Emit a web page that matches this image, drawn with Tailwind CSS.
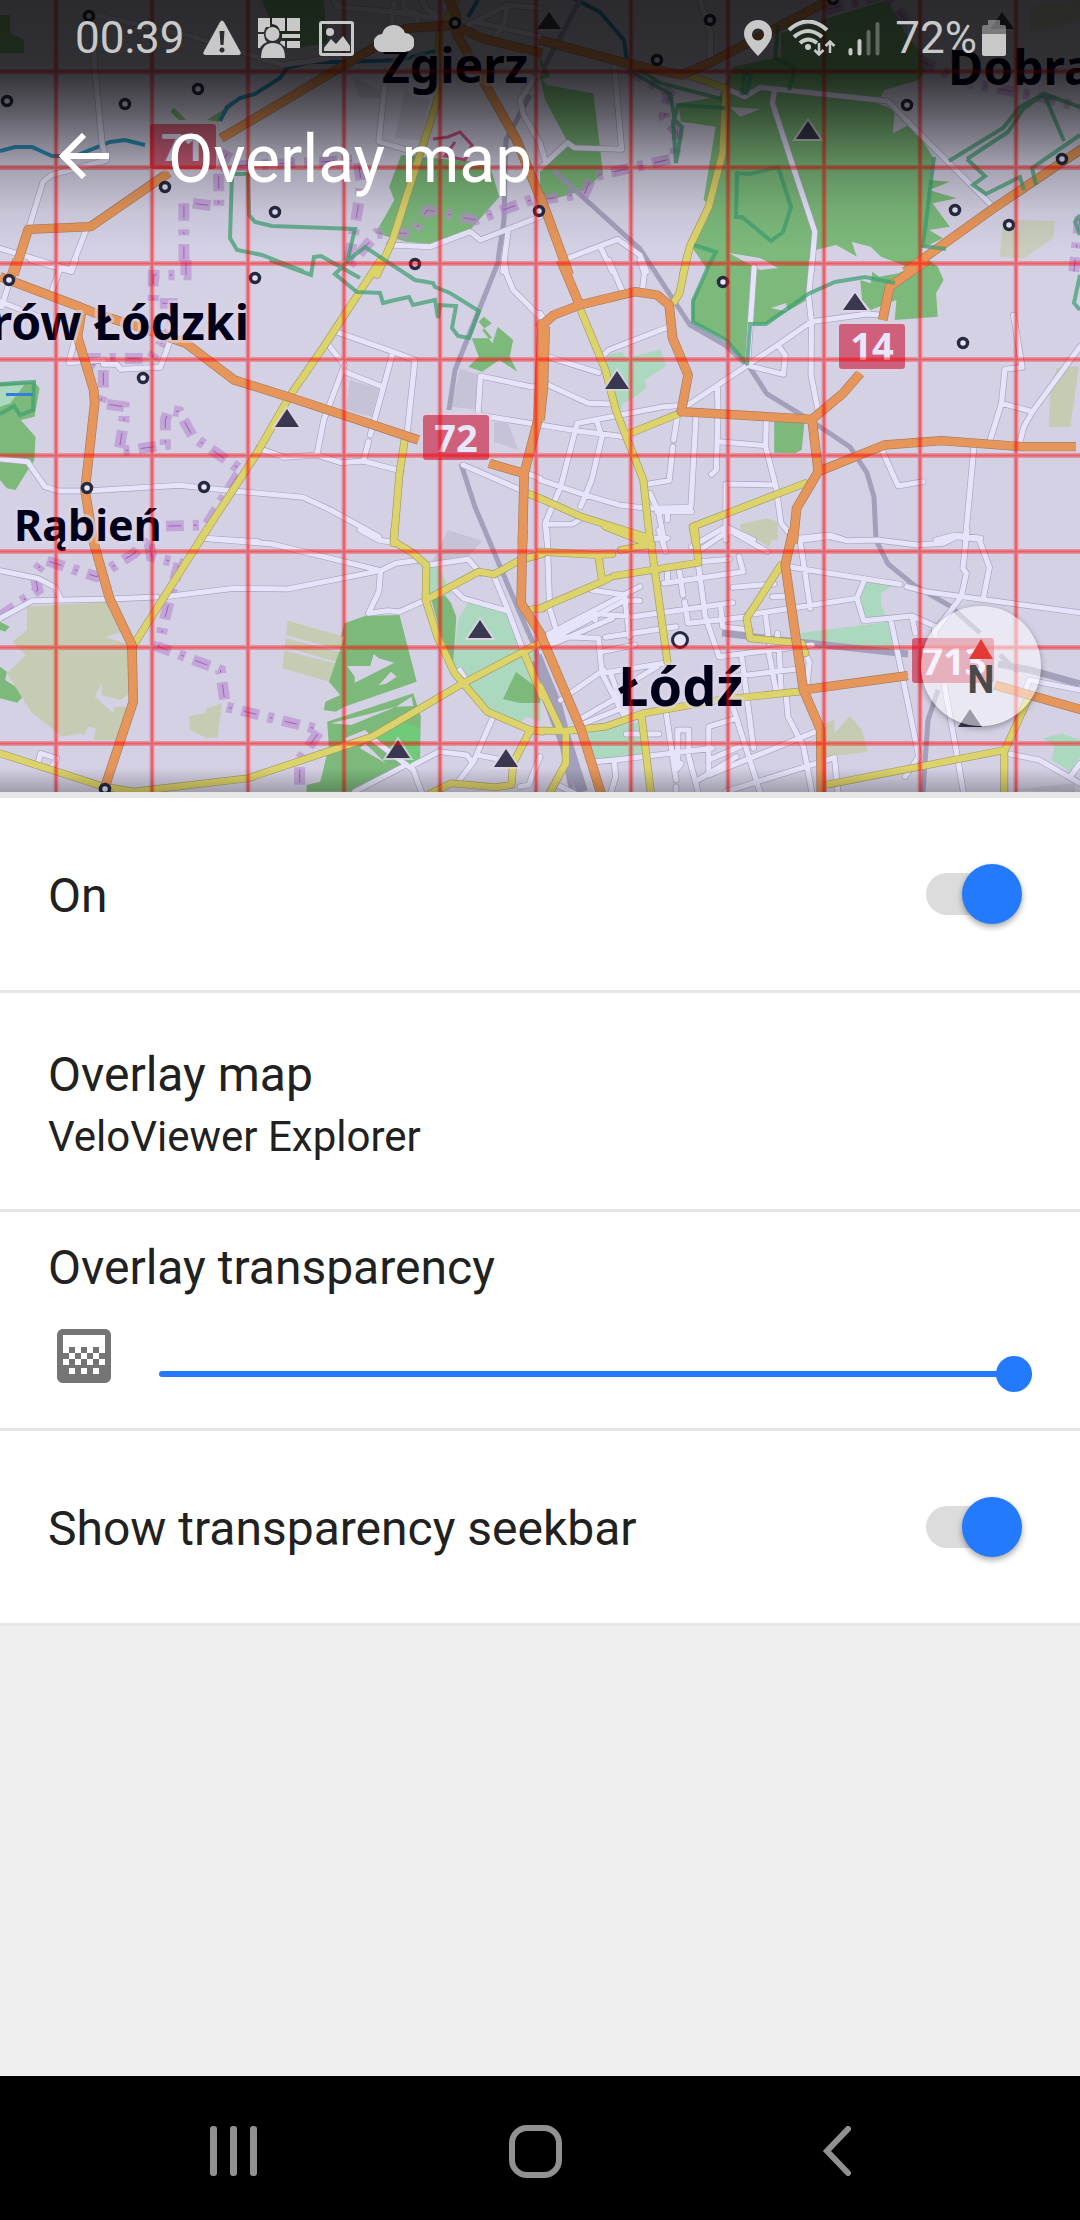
<!DOCTYPE html>
<html lang="en">
<head>
<meta charset="utf-8">
<meta name="viewport" content="width=device-width, initial-scale=1">
<title>Overlay map</title>
<script src="https://cdn.jsdelivr.net/npm/@tailwindcss/browser@4"></script>
</head>
<body class="flex min-h-screen flex-col bg-[#efefef] font-[Roboto,sans-serif] text-[#212121]">

<header class="relative h-[792px] overflow-hidden bg-[#d5d1e5] text-white">
  <svg class="absolute inset-0 h-full w-full" viewBox="0 0 1080 792" preserveAspectRatio="xMidYMin slice" role="img" aria-label="Map of the Łódź area">
    <defs>
      <linearGradient id="scrim" x1="0" y1="0" x2="0" y2="1">
        <stop offset="0" stop-color="#000" stop-opacity=".8"/>
        <stop offset=".28" stop-color="#000" stop-opacity=".77"/>
        <stop offset=".45" stop-color="#000" stop-opacity=".56"/>
        <stop offset=".65" stop-color="#000" stop-opacity=".25"/>
        <stop offset=".85" stop-color="#000" stop-opacity=".06"/>
        <stop offset="1" stop-color="#000" stop-opacity="0"/>
      </linearGradient>
      <linearGradient id="edge" x1="0" y1="0" x2="0" y2="1">
        <stop offset="0" stop-color="#000" stop-opacity="0"/>
        <stop offset="1" stop-color="#000" stop-opacity=".25"/>
      </linearGradient>
      <!-- minor roads, by map tile -->
      <g id="minor">
        <path transform="scale(.3444 .3333)" d="M268 40L275 200 297 435 310 480 150 525 125 545 82 690M275 45L560 110 820 195 950 175M1118 250L1100 425 1230 465M1130 735L1250 740 1365 695 1395 720 1568 650M1475 695L1460 815M0 745L205 810 250 690M970 0L980 20 1135 35 1240 50 1300 60M1135 90L1145 10M1170 0L1175 30 1210 40 1215 80M1225 0L1240 30 1300 60M1340 85L1475 15 1568 25M1475 15L1460 80 1430 120M1380 65L1568 110M1568 210L1510 300 1520 345 1568 430"/>
        <path transform="translate(540) scale(.3444 .3333)" d="M465 0L495 100V190M215 185L237 448 100 443 80 428 0 505M550 270L595 290 640 262 1010 303 1130 430 1320 625M680 275L675 310 735 500 798 695 788 815M80 775L225 718 290 765 310 815M175 740L210 815M0 430L15 480"/>
        <path transform="translate(0 260) scale(.3444 .3333)" d="M90 0L207 35 220 0M175 25L150 95M26 70L5 140M0 125L150 185M235 170L200 308 300 300M300 313L340 313 350 328 465 322 495 240M975 215L1140 275 1205 300 1180 540M950 250L1000 315 940 480 920 585M1000 335L1110 380M1140 280L1090 470 1075 525M1070 545L1055 605M750 565L825 592 920 585 990 608 1055 603 1165 633M0 597L80 605 130 680 170 693 250 693 520 676 700 695 880 712 960 750 1100 830M1465 0L1470 40 1490 90 1568 170M1568 380L1540 380 1395 348 1388 465 1568 495M1345 615L1568 715M1530 640L1568 655M590 835L750 845"/>
        <path transform="translate(540 260) scale(.3444 .3333)" d="M200 0L240 95M290 0L303 40 298 85M622 20L603 310M790 0L780 110 788 185 787 345 808 455M985 165L950 162 788 185 690 255 430 435 360 440 108 490 60 680 15 790 20 840M690 255L712 285 707 343 610 318M375 200L200 270 180 290M15 288L170 338M20 373L140 430 210 432M0 495L110 513 245 530M165 485L180 530 150 660 118 740M398 475L388 540M386 560L375 662 315 672M453 470L438 742 310 745 230 735 130 705 0 660M515 385L517 450 512 630 498 643M520 545L655 557M657 485L655 560 685 680 700 790 740 840M540 840V672L680 675M320 700L345 760 360 840M340 755L440 755M370 760V780M20 793L95 792 120 775M995 575L1040 678 1112 665M1375 165L1400 322 1350 328 1340 430 1307 540M1340 430L1430 455M1568 260L1430 455 1405 500 1393 548M1260 560L1235 840M440 860L540 800 620 840M750 835L840 825 880 838M1150 840L1205 825 1280 835M0 160L15 180"/>
        <path transform="translate(0 530) scale(.3444 .3333)" d="M0 122L110 145 160 172 178 210M0 265L95 212 320 207 455 201M480 200L680 175 835 177 1105 122 1150 100 1220 90M590 25L790 42 1105 122 1100 185 1070 250 1125 242 1160 245 1236 210M1045 0L1100 30 1145 38M1245 105L1360 88 1395 130M1320 180L1345 205 1475 243M1435 140L1475 240 1520 365M1085 630L1200 720 1225 790M1030 785L1170 710M1200 705L1275 665 1355 675 1370 695M1430 565L1375 695 1330 755M1385 675L1450 688M1568 680L1535 765 1510 770M110 700L118 670 165 685 150 712M1335 420L1350 445"/>
        <path transform="translate(540 530) scale(.3444 .3333)" d="M20 0L28 235 50 310M345 0L365 65M360 160L590 125 578 80M465 60L550 0 660 65M465 95L550 88M405 125L415 195M370 110V155M330 25H370M460 105L480 260 520 380 790 345M290 170L20 315M150 180L245 195 260 320M290 212H245L30 330M0 330L150 250 270 260 560 218M210 265L30 345M160 240V270M190 322L395 290M30 318L170 325 180 430 245 560M420 215L430 280 540 268 600 260M525 235L530 290 610 300M560 172L680 162M675 200L720 198M600 255L920 205 940 155M760 30L840 20 890 32 980 30 1095 45 1170 40 1210 20 1275 28 1305 112 1288 200M755 30L785 235M730 112L1045 163M1065 170L1120 185 1568 248M1240 0L1228 115 1238 130 1223 200 1150 300M920 205L940 272 1080 258 1150 290M1020 275L1100 680 1060 740M1080 258L1090 310M1145 300L1210 670 1230 790M655 255L665 340M690 310V340M275 345L180 365M360 400L180 430M185 420L60 510M230 500L120 565M260 525L130 580M340 410L260 460M205 430L250 560M585 375L620 655M665 370L685 480M695 370L700 480M560 440L740 418M770 370L782 395 775 465M715 500L720 560 765 650 790 790M250 612H345M365 540L390 715 395 750M395 790V770M400 700V600H432V680L460 790M400 715L410 700M160 695L215 690 220 740 205 790M220 690L500 655M570 565L490 590V735L800 605M460 750L570 680M560 530L600 660 640 790M490 690L580 650M540 785L855 683 865 785M1365 672L1450 690 1568 760M1568 700L1540 740M1410 480L1420 450 1568 480M50 765L100 790M250 560L265 530"/>
      </g>
      <g id="yellow">
        <path transform="scale(.3444 .3333)" d="M1325 0L1275 100 1270 300 1140 720 1095 825"/>
        <path transform="translate(540) scale(.3444 .3333)" d="M430 225L540 265 530 460 490 620 435 740 415 825"/>
        <path transform="translate(0 260) scale(.3444 .3333)" d="M1105 0L940 260 840 410 740 590 575 850M1175 540L1160 640 1143 850M1530 700L1568 715"/>
        <path transform="translate(540 260) scale(.3444 .3333)" d="M427 -10L405 100 390 125M120 155L190 330 220 450 250 530 300 660 320 850M250 525L405 460M0 715L120 770 320 835M452 850L443 800 770 670"/>
        <path transform="translate(0 530) scale(.3444 .3333)" d="M600 0L480 195 388 345M1145 0V35L1200 70 1238 105 1236 210 1270 320 1320 430 1345 460 1415 545 1540 600 1575 605M1236 210L1390 125 1435 133 1510 90 1575 72M1575 335L1345 460 1080 620 720 745 390 785 300 770 0 670M1520 365L1575 500M1540 600L1490 700 1485 765 1440 772 1310 760 1250 790M1530 240L1575 235"/>
        <path transform="translate(540 530) scale(.3444 .3333)" d="M190 -10L325 45M0 65L165 75 210 72M170 80L180 150M0 235L180 155 200 145M325 60L370 395M235 60L325 43M215 138L460 98 450 0M700 105L600 265 610 325 760 340 770 370M0 602L75 603 190 590 300 550 520 510 750 485M295 560L322 790M75 603V700L30 785M0 470L60 600M830 765L1350 660 1420 500M1348 660V790"/>
      </g>
      <g id="orange">
        <path transform="scale(.3444 .3333)" d="M642 415L1180 85 1320 75 1400 115 1575 160M1300 -10L1325 45V100L1410 255 1500 420 1575 610M40 825L82 688 263 680 490 518"/>
        <path transform="translate(540) scale(.3444 .3333)" d="M0 120L250 190 410 225 500 185 850 -5M0 585L85 825M1575 445L1310 630 1060 815"/>
        <path transform="translate(0 260) scale(.3444 .3333)" d="M50 0L28 60M0 50L230 140 290 165 400 200 540 250 680 360 850 415 1070 490 1215 540M238 145L225 230 272 390 275 430 247 690 270 840M1420 610L1520 640M1575 180L1562 480 1522 640 1517 850"/>
        <path transform="translate(540 260) scale(.3444 .3333)" d="M60 0L115 135M-5 205L40 165 115 135 275 95 340 105 375 135 385 235 430 345 410 455 790 478 880 400 930 340M995 180L1015 80 1125 0M790 478L808 635 745 745 735 850M808 635L1000 555 1165 542 1400 560H1556M15 200L10 380 0 480"/>
        <path transform="translate(0 530) scale(.3444 .3333)" d="M270 30L318 205 383 345 387 515 305 770M1518 0L1513 220 1575 320"/>
        <path transform="translate(540 530) scale(.3444 .3333)" d="M735 0L712 105 765 480 790 540 815 600 817 790M765 480L1068 437M1320 465L1575 540M0 310L120 600 180 800"/>
      </g>
      <g id="boundary">
        <path transform="scale(.3444 .3333)" d="M534 610V800M560 610L635 620V500L1040 480 1050 560 1010 800 1095 700H1200L1240 630 1380 660 1568 590M640 500L665 450"/>
        <path transform="translate(540) scale(.3444 .3333)" d="M0 600L130 580 150 530 390 475 400 400 360 350 375 280 250 205M830 30L1010 -20 1070 80M1100 180L1250 250 1450 290 1568 320M1568 650L1550 815"/>
        <path transform="translate(0 260) scale(.3444 .3333)" d="M540 0V45H445V130H500V200L440 295H240L300 330V400L290 430 360 440V480L345 575 480 555V480L490 450 520 455 560 530 700 630 640 730 600 795 430 800"/>
        <path transform="translate(0 530) scale(.3444 .3333)" d="M0 260L110 180 100 130 130 90 280 140 390 70 430 20 440 80 520 100 480 260 460 350 640 420 655 530 930 600 870 690V790"/>
      </g>
      <path id="grid" d="M56 0V792M152 0V792M248 0V792M344 0V792M440 0V792M536 0V792M631 0V792M728 0V792M824 0V792M920 0V792M1016 0V792M0 71.500H1080M0 167.500H1080M0 263.500H1080M0 359.500H1080M0 455.500H1080M0 551.500H1080M0 647.500H1080M0 743.500H1080"/>
    </defs>

    <!-- woods -->
    <g fill="#7cb97b">
      <g transform="scale(.3444 .3333)">
        <path d="M0 45H30V100L70 120V160H0ZM760 0H940L950 130 860 145 800 100ZM1165 465L1420 490 1450 590 1365 690 1250 732 1180 725 1090 700 1145 600 1130 560ZM495 335L505 323 540 360H520ZM600 360L680 310 635 365Z"/>
      </g>
      <g transform="translate(540) scale(.3444 .3333)">
        <path d="M0 230L20 255 155 280 183 520 130 570 30 600 0 590V505L80 425 15 300ZM850 50L1010 0 1060 100 1130 190 1100 240 1000 270 980 310 1030 330 1025 400 1080 370 1140 470 1130 540 1190 545 1130 570 1210 595 1140 610 1190 680 1130 690 1170 715 1110 745 1105 815 990 770 960 740 905 725 920 770 860 735 800 750 790 815H490L440 740 500 620 475 600 510 380 410 365 400 310 520 290 560 200 700 170V100ZM0 170L30 230 0 240Z"/>
      </g>
      <g transform="translate(0 260) scale(.3444 .3333)">
        <path d="M1390 185L1405 170 1428 190 1400 210 1430 250 1445 200 1490 240 1480 290 1502 335 1450 300 1400 335 1360 320 1390 290 1370 235H1430ZM0 370L100 365 115 385 100 470 60 480 103 530 100 600 75 640 45 690 20 685 0 660Z"/>
      </g>
      <g transform="translate(540 260) scale(.3444 .3333)">
        <path d="M500 0H785L775 120 655 192 605 190 600 310 540 240 440 185 443 120ZM930 60L960 70 965 35 985 50 1040 40 1130 0 1155 20 1172 60 1150 100 1155 170 1030 180 1035 120 960 150 935 120ZM680 485H768L760 570 740 580 680 578Z"/>
      </g>
      <g transform="translate(0 530) scale(.3444 .3333)">
        <path d="M1000 280L1060 258 1160 255 1210 455 1000 530 975 545 940 540 945 515 988 495 955 455ZM950 575L1200 490 1222 560 1218 690 1100 740 1030 785H890V765L930 755 955 650ZM1250 200L1280 180 1310 220 1325 260 1315 420 1290 350ZM0 275L28 290 15 305 0 300ZM0 410L20 425 15 450 75 490 50 518 0 505Z"/>
        <path fill="#6fcb78" d="M1090 625L1170 575 1220 595V690L1190 710Z"/>
      </g>
    </g>
    <!-- parks -->
    <g fill="#acd8bf">
      <path transform="translate(540 260) scale(.3444 .3333)" d="M195 285L240 275 250 295 350 268 365 318 305 360 310 380 285 405 240 430 235 460 190 340Z"/>
      <path transform="translate(0 530) scale(.3444 .3333)" d="M1245 110H1275L1310 190 1250 210ZM1360 215L1475 245 1515 350 1570 370V575L1530 560 1510 575 1415 545 1350 460 1315 415 1330 270Z"/>
      <path transform="translate(540 530) scale(.3444 .3333)" d="M940 155L1025 165 990 190V225L1010 270 945 268 930 200ZM750 310L1015 275 1025 355 765 330ZM140 605L290 575 295 680 155 690ZM1460 625L1515 610 1568 630V680L1540 725 1485 690 1495 650Z"/>
      <path transform="translate(0 260) scale(.3444 .3333)" d="M0 380L70 375 30 430 0 440Z"/>
    </g>
    <path fill="#7cb97b" d="M503 699L516 672 540 690V703L520 703Z"/>
    <!-- farmland and plots -->
    <g fill="#c6ccb4">
      <path transform="translate(0 530) scale(.3444 .3333)" d="M78 230L310 215 375 345V510L340 630H260L235 610 180 620 145 590 90 545 20 430 75 375 35 335 78 300ZM548 558L595 550 600 535 645 520 632 622 600 625 552 600ZM835 272L1000 320 955 455 820 415Z"/>
      <path fill="#d5d1e5" transform="translate(0 530) scale(.3444 .3333)" d="M275 500L295 460V495L350 510 375 490V530H330V550L275 500ZM305 322L370 300 380 345ZM240 625L255 590 278 595 270 640ZM830 315L990 360 985 365 830 325ZM825 350L975 395 972 400 825 362Z"/>
      <path transform="translate(540 530) scale(.3444 .3333)" d="M825 580L855 570V610L900 557 935 600 952 665 825 680ZM580 0H690L665 50Z"/>
      <path transform="translate(540 260) scale(.3444 .3333)" d="M580 793L660 775 690 785V840H590ZM1480 400L1500 325 1565 318 1540 500 1478 502Z"/>
      <path transform="translate(540) scale(.3444 .3333)" d="M1345 658L1495 663 1490 715 1405 775 1335 770ZM1420 20L1568 0V60L1420 100Z" fill-opacity=".8"/>
    </g>
    <g fill="#c7c3d6">
      <path transform="translate(0 260) scale(.3444 .3333)" d="M1015 360L1100 385 1080 470 1005 450ZM1335 325L1390 345V450L1310 440ZM1435 485L1475 490 1505 570 1435 545Z"/>
      <path transform="translate(0 530) scale(.3444 .3333)" d="M1300 0L1400 32 1360 80 1255 95Z"/>
      <path d="M352 76L380 90V98H359ZM405 90L430 100 420 140 395 138ZM1010 790L1075 783V792Z"/>
    </g>
    <path fill="#d5d1e5" transform="translate(0 530) scale(.3444 .3333)" d="M1008 408H1075L1085 372 1100 385 1145 398 1085 430 1030 458V440ZM1100 465L1135 425 1152 440 1120 462ZM960 580L1060 555 1150 530 1195 500 1200 528 1150 530 1020 585ZM1000 625L1060 600 1075 615 1010 640ZM1045 655L1060 640 1120 700Z"/>
    <path fill="#d5d1e5" d="M729 253L760 258 778 268 760 270ZM771 308L786 303 788 312ZM730 107L760 109 740 117Z"/>

    <!-- water -->
    <g fill="none" stroke="#2f8fb8" stroke-width="4">
      <path d="M0 151L15 147H32L52 156H75L110 142 125 140 145 145M220 121L227 107 240 98 255 94 280 78 287 68 310 62 342 62 400 60 440 50M573 -2L600 12 624 40 627 62M478 0L468 17"/>
      <path stroke="#2f7fdc" stroke-width="3" d="M6 394.500H33"/>
    </g>

    <!-- rail -->
    <g fill="none" stroke="#a3a0bb" stroke-width="5">
      <path d="M499 260L455 370 449 410M461 464L475 507 510 590 536 650 545 700 562 745 572 792M498 260L504 220 506 140 530 95M553 170L640 249 690 325 725 345 750 368 767 394 810 420 850 447 867 473 874 497 876 540 888 564 915 586 950 606 980 633"/>
      <path stroke-width="7" d="M722 633L780 640 908 654M998 664L1030 670 1080 684M538 655L555 700"/>
      <path d="M540 75L580 0M938 690L928 720 923 792M1000 655L1018 672"/>
      <path stroke-width="12" d="M537 660L556 705 564 735 582 792"/>
    </g>

    <!-- administrative boundary -->
    <use href="#boundary" fill="none" stroke="#b98fd0" stroke-opacity=".65" stroke-width="32" stroke-dasharray="52 26 18 26"/>
    <use href="#boundary" fill="none" stroke="#a860bb" stroke-width="3" stroke-dasharray="38 40 8 36" stroke-dashoffset="-7"/>

    <g stroke-linejoin="round" fill="none">
      <use href="#minor" stroke="#a9a6bb" stroke-width="19" stroke-linecap="round"/>
      <use href="#minor" stroke="#e6e4fb" stroke-width="15" stroke-linecap="round"/>
      <use href="#yellow" stroke="#a39d68" stroke-width="23" stroke-linecap="round"/>
      <use href="#yellow" stroke="#ddd36b" stroke-width="19" stroke-linecap="round"/>
      <use href="#orange" stroke="#a87c60" stroke-width="28"/>
      <use href="#orange" stroke="#e6965a" stroke-width="24"/>
    </g>

    <!-- nature reserve outlines -->
    <g fill="none" stroke="#3f9f70" stroke-opacity=".72" stroke-width="4">
      <path d="M250 174H232L230 238 237 250 262 255 303 271M248 174L249 215 255 222 272 226 355 229 347 262 335 274 357 292 380 293 383 303 395 300 409 297 413 305 435 300 438 318 440 305 456 306 452 328 458 336 469 338 479 311 450 293 435 287 433 283 415 280 365 247 346 262M270 260L311 275 314 257 321 256 360 278"/>
      <path d="M737 173L750 174 778 167 791 207 783 232 771 241 742 217H736ZM694 245L716 252 709 265 693 301V322L726 340 748 365M748 324H766L808 294 835 282 865 277 895 283M632 72L670 94 675 120 682 127 676 163 673 122 678 105 725 108M640 70L660 83 722 99M742 95L744 75H751L746 95M778 25L775 58 795 68 789 90M934 157L923 246 946 249M949 161L1003 128 1020 107 1044 94 1080 107M967 159L1008 132 1024 108 1044 94 1064 141M967 159L985 176 973 185 986 194 1020 177 1024 190M1080 135L1032 168 1036 185M1080 215L1075 222 1080 235M1080 275L1074 303 1080 310M747 365L750 325"/>
      <path d="M0 384L34 382 33 410 20 415 14 406 0 414"/>
    </g>
    <path fill="none" stroke="#c4568a" stroke-width="3" d="M433 139L448 137 460 132 472 145 465 160 445 156 455 142"/>

    <!-- villages -->
    <g fill="#e6e4fb" stroke="#262a40" stroke-width="3.500">
      <circle cx="89" cy="16" r="4.500"/><circle cx="7" cy="101" r="4.500"/><circle cx="125" cy="104" r="4.500"/><circle cx="198" cy="89" r="4.500"/><circle cx="165" cy="187" r="4.500"/><circle cx="275" cy="212" r="4.500"/><circle cx="415" cy="264" r="4.500"/><circle cx="455" cy="23" r="4.500"/><circle cx="710" cy="20" r="4.500"/><circle cx="657" cy="60" r="4.500"/><circle cx="833" cy="-1" r="4.500"/><circle cx="907" cy="105" r="4.500"/><circle cx="955" cy="210" r="4.500"/><circle cx="1009" cy="225" r="4.500"/><circle cx="1062" cy="159" r="4.500"/><circle cx="539" cy="211" r="4.500"/><circle cx="9" cy="280" r="4.500"/><circle cx="255" cy="278" r="4.500"/><circle cx="143" cy="378" r="4.500"/><circle cx="87" cy="488" r="4.500"/><circle cx="204" cy="487" r="4.500"/><circle cx="723" cy="282" r="4.500"/><circle cx="963" cy="343" r="4.500"/><circle cx="105" cy="789" r="4.500"/><circle cx="680" cy="640" r="7.500" stroke-width="3"/>
    </g>
    <!-- peaks -->
    <g fill="#3a3850" stroke="#ddd6e6" stroke-opacity=".75" stroke-width="4" paint-order="stroke">
      <path d="M549 12l12 17h-24zM1002 12l12 17h-24zM808 121l12 18h-24zM287 409l12 18h-24zM617 371l12 18h-24zM855 293l12 17h-24zM480 620l12 18h-24zM398 740l12 18h-24zM506 749l12 18h-24zM970 709l12 18h-24z"/>
    </g>
    <!-- road shields -->
    <g fill="#ce607b" stroke="#ddd0e0" stroke-opacity=".7" stroke-width="5" paint-order="stroke">
      <rect x="150" y="124" width="66" height="45" rx="3"/><rect x="423" y="415" width="66" height="45" rx="3"/><rect x="839" y="324" width="66" height="45" rx="3"/><rect x="912" y="638" width="82" height="45" rx="3"/>
    </g>
    <g class="font-['Noto_Sans',sans-serif] text-[38px] font-bold" fill="#e8e6fb" text-anchor="middle">
      <text x="183" y="161">71</text><text x="456" y="452">72</text><text x="872" y="360">14</text><text x="954" y="675">713</text>
    </g>
    <!-- place names -->
    <g class="font-['Noto_Sans',sans-serif] font-bold" fill="#00001a" stroke="#dcd6ea" stroke-opacity=".6" stroke-width="6" stroke-linejoin="round" paint-order="stroke">
      <text class="text-[48px]" x="382" y="83">Zgierz</text>
      <text class="text-[48px]" x="948" y="85">Dobra-</text>
      <text class="text-[48px]" x="249" y="340" text-anchor="end">Aleksandrów Łódzki</text>
      <text class="text-[43px]" x="14" y="541">Rąbień</text>
      <text class="text-[54px]" x="618" y="706">Łódź</text>
    </g>

    <!-- explorer tile grid -->
    <g fill="none" stroke="#f00">
      <use href="#grid" stroke-opacity=".3" stroke-width="5"/>
      <use href="#grid" stroke-opacity=".35" stroke-width="2"/>
    </g>

    <rect width="1080" height="250" fill="url(#scrim)"/>
    <rect y="768" width="1080" height="24" fill="url(#edge)"/>
  </svg>

  <div class="relative flex h-[76px] items-center justify-between pl-[75px] pr-[74px] text-[44px] leading-[52px] text-[#c8c8c8]">
    <div class="flex items-center">
      <span>00:39</span>
      <svg class="ml-[18px] h-9 w-[38px]" viewBox="0 0 38 36" fill="#c8c8c8" aria-hidden="true"><path fill-rule="evenodd" d="M17 2q2-3 4 0l16.500 30q1 3-2 3h-33q-3 0-2-3zM16.500 11l1 14h3l1-14zM19 27.500a2.500 2.500 0 1 0 .01 0z"/></svg>
      <svg class="ml-[17px] h-10 w-[42px]" viewBox="0 0 42 40" fill="#c8c8c8" aria-hidden="true"><path d="M0 0h12v9H8a12 12 0 0 0-2 5H0zM14 0h13v13h-5a9 9 0 0 0-8-7zM29 0h13v13H29zM0 16h6q0 5 3 8-5 2-7 6H0zM24 16h18v4H24zM29 23h13v7H29zM23 23h4v6l-5-4z"/><circle cx="14.500" cy="16" r="7"/><path d="M3 40q0-15 12-15t12 15z"/></svg>
      <svg class="ml-[19px] h-[35px] w-[35px]" viewBox="0 0 35 35" fill="#c8c8c8" aria-hidden="true"><path fill-rule="evenodd" d="M3 0h29q3 0 3 3v29q0 3-3 3H3q-3 0-3-3V3q0-3 3-3zm0 3v29h29V3z"/><path d="M5 27l7-9 5 5 7-8 7 10v5H5z"/><circle cx="11" cy="11" r="4"/></svg>
      <svg class="ml-5 h-7 w-10" viewBox="0 0 40 28" fill="#c8c8c8" aria-hidden="true"><path d="M9 28a9 9 0 0 1-1-18A12 12 0 0 1 31 9a9.500 9.500 0 0 1 0 19z"/></svg>
    </div>
    <div class="flex items-center">
      <svg class="h-9 w-7" viewBox="0 0 28 36" fill="#c8c8c8" aria-hidden="true"><path fill-rule="evenodd" d="M14 0a14 14 0 0 1 14 14q0 8-14 22Q0 22 0 14A14 14 0 0 1 14 0zm0 8.500a6 6 0 1 0 .01 0z"/></svg>
      <svg class="ml-4 h-9 w-12" viewBox="0 0 48 36" fill="none" stroke="#c8c8c8" stroke-width="4" aria-hidden="true"><path d="M1 10Q20-7 39 10M6 17q14-12 28 0M12 23q8-7 17 0"/><circle cx="20" cy="27" r="3" fill="#c8c8c8" stroke="none"/><path stroke-width="2.500" d="M31 23v11M26.500 30l4.500 4.500 4.500-4.500M42 33V21M37.500 26l4.500-4.500 4.500 4.500"/></svg>
      <svg class="ml-3 h-[35px] w-8" viewBox="0 0 32 35" fill="none" stroke="#c8c8c8" stroke-width="4" stroke-linecap="round" aria-hidden="true"><path d="M2.500 29v3.500M11.500 20v12.500"/><path stroke-opacity=".4" d="M20.500 11v21.500M29.500 3v29.500"/></svg>
      <span class="ml-[15px]">72%</span>
      <svg class="ml-[5px] h-9 w-6" viewBox="0 0 24 36" fill="#c8c8c8" aria-hidden="true"><path fill-opacity=".5" d="M6 0h12v5h4q2 0 2 2v7H0V7q0-2 2-2h4z"/><path d="M0 14h24v20q0 2-2 2H2q-2 0-2-2z"/></svg>
    </div>
  </div>

  <div class="relative flex h-[164px] items-center pl-12">
    <button class="flex h-[76px] w-[72px] items-center justify-center pb-1" aria-label="Back">
      <svg class="h-[46px] w-[50px]" viewBox="0 0 50 46" fill="none" stroke="#fff" stroke-width="6" aria-hidden="true"><path d="M50 23H5M25 2L4 23l21 21"/></svg>
    </button>
    <h1 class="pl-12 pt-1 text-[66px] leading-[76px]">Overlay map</h1>
  </div>

  <button class="absolute right-[39px] top-[606px] flex h-[120px] w-[120px] flex-col items-center rounded-full bg-white/50 pt-[33px] shadow-[0_2px_6px_rgba(0,0,0,0.35)]" aria-label="Compass, north up">
    <svg class="h-5 w-6" viewBox="0 0 24 20" fill="#e53935" aria-hidden="true"><path d="M12 0l12 20H0z"/></svg>
    <span class="text-[38px] font-bold leading-[42px] text-[#4a4a4a]">N</span>
  </button>
</header>

<main class="flex-1 border-t-6 border-[#e6e6e6]">
  <div class="bg-white text-[48px] leading-[56px]">
    <label class="flex items-center justify-between border-b-3 border-[#e6e6e6] py-[66px] pl-12 pr-[58px]">
      <span class="pt-1">On</span>
      <input type="checkbox" checked class="relative h-[60px] w-24 appearance-none before:absolute before:left-0 before:top-[9px] before:h-[42px] before:w-[76px] before:rounded-full before:bg-[#dcdcdc] before:content-[''] after:absolute after:right-0 after:top-0 after:h-[60px] after:w-[60px] after:rounded-full after:bg-[#237afc] after:shadow-[0_3px_6px_rgba(0,0,0,0.35)] after:content-['']">
    </label>
    <button class="flex w-full flex-col gap-2 border-b-3 border-[#e6e6e6] px-12 pb-[46px] pt-[54px] text-left">
      <span>Overlay map</span>
      <span class="text-[42px] leading-[52px]">VeloViewer Explorer</span>
    </button>
    <div class="border-b-3 border-[#e6e6e6] px-12 pb-9 pt-7">
      <label for="transparency" class="block">Overlay transparency</label>
      <div class="flex items-start gap-[39px] pt-6">
        <svg class="h-[72px] w-[72px] shrink-0" viewBox="0 0 24 24" fill="#757575" aria-hidden="true"><path d="M11 9h2v2h-2zm-2 2h2v2H9zm4 0h2v2h-2zm2-2h2v2h-2zM7 9h2v2H7zm12-6H5c-1.100 0-2 .9-2 2v14c0 1.100.9 2 2 2h14c1.100 0 2-.9 2-2V5c0-1.100-.9-2-2-2zM9 18H7v-2h2v2zm4 0h-2v-2h2v2zm4 0h-2v-2h2v2zm2-7h-2v2h2v2h-2v-2h-2v2h-2v-2h-2v2H9v-2H7v2H5v-2h2v-2H5V5h14v6z"/></svg>
        <input id="transparency" type="range" min="0" max="255" value="255" class="mt-9 h-9 min-w-0 flex-1 appearance-none bg-transparent [&::-webkit-slider-runnable-track]:h-[6px] [&::-webkit-slider-runnable-track]:rounded-full [&::-webkit-slider-runnable-track]:bg-[#237afc] [&::-webkit-slider-thumb]:-mt-[15px] [&::-webkit-slider-thumb]:h-9 [&::-webkit-slider-thumb]:w-9 [&::-webkit-slider-thumb]:appearance-none [&::-webkit-slider-thumb]:rounded-full [&::-webkit-slider-thumb]:bg-[#237afc]">
      </div>
    </div>
    <label class="flex items-center justify-between border-b-3 border-[#e6e6e6] py-[66px] pl-12 pr-[58px]">
      <span class="pt-1">Show transparency seekbar</span>
      <input type="checkbox" checked class="relative h-[60px] w-24 appearance-none before:absolute before:left-0 before:top-[9px] before:h-[42px] before:w-[76px] before:rounded-full before:bg-[#dcdcdc] before:content-[''] after:absolute after:right-0 after:top-0 after:h-[60px] after:w-[60px] after:rounded-full after:bg-[#237afc] after:shadow-[0_3px_6px_rgba(0,0,0,0.35)] after:content-['']">
    </label>
  </div>
</main>

<nav class="grid h-36 grid-cols-3 bg-black pl-[82px] pr-[92px]" aria-label="System navigation">
  <button class="flex items-center justify-center pt-1.5" aria-label="Recent apps">
    <svg class="h-[50px] w-[47px]" viewBox="0 0 47 50" fill="#919191" aria-hidden="true"><rect width="7" height="50" rx="3"/><rect x="20" width="7" height="50" rx="3"/><rect x="40" width="7" height="50" rx="3"/></svg>
  </button>
  <button class="flex items-center justify-center pt-1.5" aria-label="Home">
    <svg class="h-[53px] w-[53px]" viewBox="0 0 53 53" fill="none" stroke="#919191" stroke-width="6" aria-hidden="true"><rect x="3" y="3" width="47" height="47" rx="15"/></svg>
  </button>
  <button class="flex items-center justify-center pt-1.5" aria-label="Back to previous screen">
    <svg class="h-[50px] w-[30px]" viewBox="0 0 30 50" fill="none" stroke="#919191" stroke-width="6" stroke-linecap="round" aria-hidden="true"><path d="M26 3L5 25l21 22"/></svg>
  </button>
</nav>
</body>
</html>
